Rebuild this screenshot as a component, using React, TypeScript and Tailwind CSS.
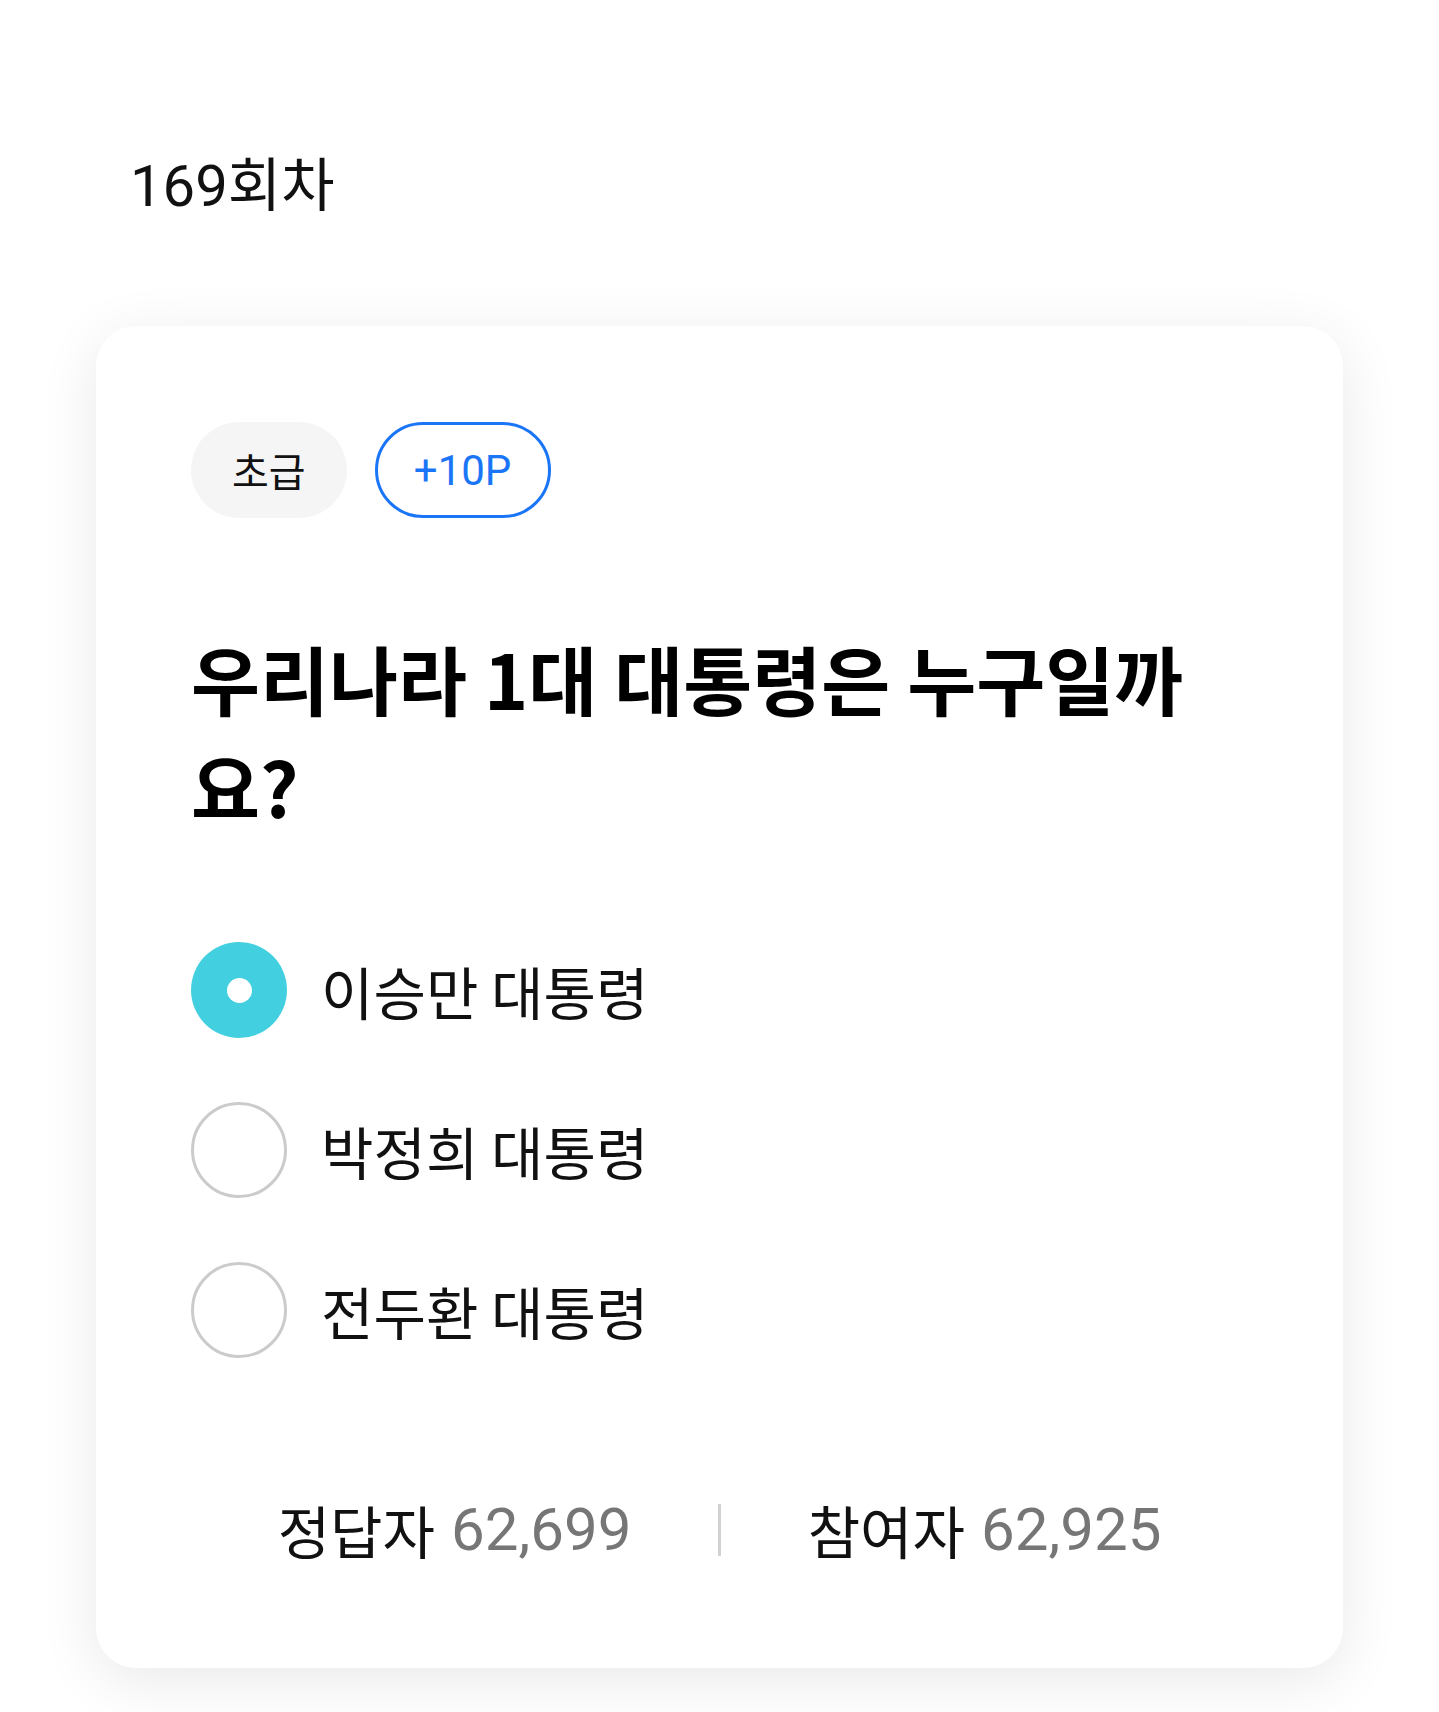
import React from "react";

const options = ["이승만 대통령", "박정희 대통령", "전두환 대통령"];

function Radio({ checked }: { checked: boolean }) {
  if (checked) {
    return (
      <div className="w-[96px] h-[96px] rounded-full bg-[#42cfdf] flex items-center justify-center shrink-0">
        <div className="w-[25px] h-[25px] rounded-full bg-white" />
      </div>
    );
  }
  return <div className="w-[96px] h-[96px] rounded-full border-[3px] border-[#cbcbcb] bg-white shrink-0" />;
}

export default function App() {
  return (
    <div className="min-h-[1712px] bg-white font-['Roboto','Noto_Sans_CJK_KR',sans-serif] text-[#111]">
      <div className="pt-[146px] pl-[130px] text-[58px] leading-[80px] text-[#111]">169회차</div>
      <div className="mx-[96px] mt-[100px] bg-white rounded-[40px] shadow-[0_12px_60px_rgba(0,0,0,0.09)] pt-[96px] pb-[98px] px-[95px]">
        <div className="flex gap-[28px]">
          <div className="h-[96px] px-[41px] rounded-full bg-[#f5f5f5] flex items-center text-[40px] font-['Noto_Sans_CJK_KR',sans-serif] text-[#111]">
            초급
          </div>
          <div className="h-[96px] w-[176px] rounded-full border-[3px] border-[#1a75f7] flex items-center justify-center text-[42px] text-[#1a75f7]">
            +10P
          </div>
        </div>
        <div className="mt-[106px] text-[75px] leading-[108px] font-bold font-['Noto_Sans_CJK_KR',sans-serif] text-black break-all">
          우리나라 1대 대통령은 누구일까요?
        </div>
        <div className="mt-[102px] flex flex-col gap-[64px]">
          {options.map((o, i) => (
            <div key={o} className="flex items-center gap-[34px]">
              <Radio checked={i === 0} />
              <span className="text-[57px] leading-[70px] font-['Noto_Sans_CJK_KR',sans-serif] text-[#111]">{o}</span>
            </div>
          ))}
        </div>
        <div className="mt-[132px] flex items-center h-[80px]">
          <div className="flex-1 flex justify-center items-center gap-[16px]">
            <span className="text-[57px] font-['Noto_Sans_CJK_KR',sans-serif] text-[#111]">정답자</span>
            <span className="text-[60px] text-[#767676]">62,699</span>
          </div>
          <div className="w-[3px] h-[52px] bg-[#d2d2d2]" />
          <div className="flex-1 flex justify-center items-center gap-[16px]">
            <span className="text-[57px] font-['Noto_Sans_CJK_KR',sans-serif] text-[#111]">참여자</span>
            <span className="text-[60px] text-[#767676]">62,925</span>
          </div>
        </div>
      </div>
    </div>
  );
}
